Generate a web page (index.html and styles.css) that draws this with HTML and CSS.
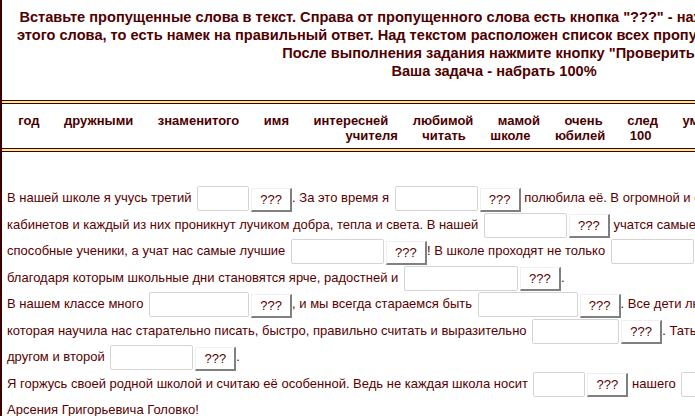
FILE: index.html
```html
<!DOCTYPE html>
<html lang="ru">
<head>
<meta charset="utf-8">
<title>Вставьте пропущенные слова</title>
<link rel="stylesheet" href="styles.css">
</head>
<body>
<div class="page">
  <div class="head">
    <p class="task">
      <span class="ln">Вставьте пропущенные слова в текст. Справа от пропущенного слова есть кнопка "???" - нажав на нее, вы увидите первую букву</span><br>
      <span class="ln">этого слова, то есть намек на правильный ответ. Над текстом расположен список всех пропущенных слов в алфавитном порядке.</span><br>
      После выполнения задания нажмите кнопку "Проверить".<br>
      Ваша задача - набрать 100%
    </p>
  </div>
  <div class="words">
    <div class="row"><span>год</span><span>дружными</span><span>знаменитого</span><span>имя</span><span>интересней</span><span>любимой</span><span>мамой</span><span>очень</span><span>след</span><span>умными</span><span>уроки</span><span>уютной</span><span>учительница</span></div>
    <div class="row"><span>учителя</span><span>читать</span><span>школе</span><span>юбилей</span><span>100</span></div>
  </div>
  <div class="text">
    <p class="story">В нашей школе я учусь третий <input class="gap" style="width:52px"><button class="hint">???</button>. За это время я <input class="gap" style="width:83px"><button class="hint">???</button> полюбила её. В огромной и светлой школе много уютных<br>кабинетов и каждый из них проникнут лучиком добра, тепла и света. В нашей <input class="gap" style="width:83px"><button class="hint">???</button> учатся самые умные и<br>способные ученики, а учат нас самые лучшие <input class="gap" style="width:93px"><button class="hint">???</button>! В школе проходят не только <input class="gap" style="width:83px"><button class="hint">???</button>, но и праздники,<br>благодаря которым школьные дни становятся ярче, радостней и <input class="gap" style="width:114px"><button class="hint">???</button>.<br>В нашем классе много <input class="gap" style="width:100px"><button class="hint">???</button>, и мы всегда стараемся быть <input class="gap" style="width:100px"><button class="hint">???</button>. Все дети любят нашу первую учительницу,<br>которая научила нас старательно писать, быстро, правильно считать и выразительно <input class="gap" style="width:87px"><button class="hint">???</button>. Татьяна Ивановна стала нам<br>другом и второй <input class="gap" style="width:83px"><button class="hint">???</button>.<br>Я горжусь своей родной школой и считаю её особенной. Ведь не каждая школа носит <input class="gap" style="width:52px"><button class="hint">???</button> нашего <input class="gap" style="width:114px"><button class="hint">???</button> земляка<br>Арсения Григорьевича Головко!</p>
  </div>
</div>
</body>
</html>
```

FILE: styles.css
```css
html, body {
  margin: 0;
  padding: 0;
  overflow: hidden;
  background: #ffffff;
}
body {
  font-family: "Liberation Sans", Arial, sans-serif;
  color: #5a0000;
}
.page {
  width: 984px;
  border-left: 2px solid #3c0000;
  background: #ffe680;
  display: flex;
  flex-direction: column;
  gap: 2px;
}
.head {
  background: #ffffff;
  height: 101px;
  border-bottom: 1px solid #3c0000;
  box-sizing: border-box;
  padding-top: 8px;
}
.task {
  margin: 0;
  font-weight: bold;
  font-size: 14.6px;
  line-height: 18px;
  text-align: center;
  color: #500000;
}
.ln {
  white-space: nowrap;
}
.words {
  background: #ffffff;
  border-top: 1px solid #3c0000;
  border-bottom: 1px solid #3c0000;
  height: 46px;
  box-sizing: border-box;
  padding: 9px 0 0 9px;
  font-weight: bold;
  font-size: 13px;
  line-height: 15px;
  color: #4a0000;
}
.row {
  display: flex;
  justify-content: center;
  white-space: nowrap;
  gap: 24.5px;
}
.text {
  background: #ffffff;
  border-top: 1px solid #3c0000;
  padding: 33px 0 0 5px;
  height: 400px;
}
.story {
  margin: 0;
  font-size: 13px;
  line-height: 26.5px;
  white-space: nowrap;
}
.gap {
  box-sizing: border-box;
  height: 25px;
  margin: 0 0 0 2px;
  padding: 0 3px;
  border: 1px solid #d4d4d4;
  border-radius: 2px;
  background: #ffffff;
  vertical-align: middle;
  font: 13px "Liberation Sans", Arial, sans-serif;
}
.hint {
  box-sizing: border-box;
  width: 41px;
  height: 24px;
  margin: 0 0 0 2px;
  padding: 0;
  border-style: solid;
  border-width: 1px 2px 2px 1px;
  border-color: #f0f0f0 #808080 #808080 #f0f0f0;
  background: #ffffff;
  color: #5a0000;
  font: 13px "Liberation Sans", Arial, sans-serif;
  vertical-align: middle;
  position: relative;
  top: 1px;
}
```
